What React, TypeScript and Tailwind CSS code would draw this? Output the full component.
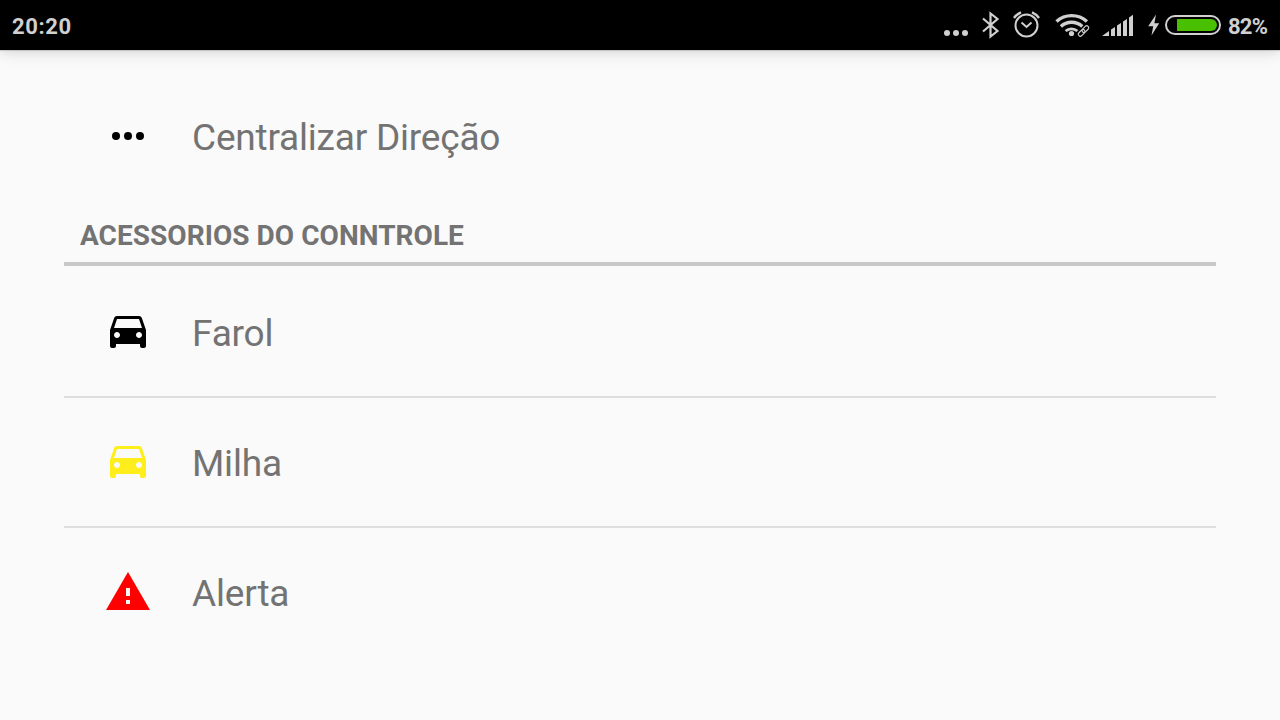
import type { ReactNode } from "react";

interface RowProps {
  label: string;
  className: string;
  icon: ReactNode;
}

const MoreIcon = () => (
  <svg viewBox="0 0 24 24" className="h-12 w-12 fill-black">
    <circle cx="6" cy="12" r="2" />
    <circle cx="12" cy="12" r="2" />
    <circle cx="18" cy="12" r="2" />
  </svg>
);

const CarIcon = ({ className }: { className: string }) => (
  <svg viewBox="0 0 24 24" className={`h-12 w-12 ${className}`}>
    <path d="M18.92 5.01C18.72 4.42 18.16 4 17.5 4h-11c-.66 0-1.21.42-1.42 1.01L3 11v8c0 .55.45 1 1 1h1c.55 0 1-.45 1-1v-1h12v1c0 .55.45 1 1 1h1c.55 0 1-.45 1-1v-8l-2.08-5.99zM6.5 15c-.83 0-1.5-.67-1.5-1.5S5.67 12 6.5 12s1.5.67 1.5 1.5S7.33 15 6.5 15zm11 0c-.83 0-1.5-.67-1.5-1.5s.67-1.5 1.5-1.5 1.5.67 1.5 1.5-.67 1.5-1.5 1.5zM5 10l1.5-4.5h11L19 10H5z" />
  </svg>
);

const AlertIcon = () => (
  <svg viewBox="0 0 24 24" className="h-12 w-12 fill-[#ff0000]">
    <path d="M1 21h22L12 2 1 21zm12-3h-2v-2h2v2zm0-4h-2v-4h2v4z" />
  </svg>
);

const StatusIcons = () => (
  <svg
    viewBox="940 0 284 50"
    className="h-[50px] w-[284px]"
    fill="none"
    stroke="#d0d0d0"
    strokeWidth="2"
  >
    {/* notifications */}
    <g fill="#d0d0d0" stroke="none">
      <circle cx="947" cy="33" r="3" />
      <circle cx="956" cy="33" r="3" />
      <circle cx="965" cy="33" r="3" />
    </g>
    {/* bluetooth */}
    <path d="M983 18.5l14.5 12.5-7 5.5v-23l7 5.5-14.5 12.5" strokeWidth="2.2" />
    {/* alarm */}
    <circle cx="1026.5" cy="25.5" r="11" />
    <path d="M1021.5 22.5l5 4.5 5-4.5" />
    <path
      d="M1014 18a16 16 0 0 1 7-5.7M1039 18a16 16 0 0 0-7-5.7"
      strokeWidth="2.4"
    />
    {/* wifi */}
    <g strokeWidth="3.4">
      <path d="M1056.5 21.5a22.5 22.5 0 0 1 30.4 0" />
      <path d="M1060.9 26.4a16 16 0 0 1 21.4 0" />
      <path d="M1065.6 31a9 9 0 0 1 11.8 0" strokeWidth="2.8" />
    </g>
    <circle cx="1071.5" cy="33.5" r="2.6" fill="#d0d0d0" stroke="none" />
    <g transform="rotate(-45 1083.5 31)" strokeWidth="1.2">
      <path d="M1078 31h11" stroke="#000" strokeWidth="7" />
      <rect x="1077" y="29" width="7.8" height="4" rx="2" />
      <rect x="1082.2" y="29" width="7.8" height="4" rx="2" />
    </g>
    {/* signal */}
    <g fill="#d0d0d0" stroke="none">
      <path d="M1102 36l7-5v5zM1111 36v-6.5l4-2.5v9zM1117 36v-10.5l4-2.5v13zM1123 36v-14.5l4-2.5v17zM1129 36v-18.5l4-2.7v21.2z" />
      {/* charging bolt */}
      <path d="M1156 14.5l-7.8 11.7h5l-1.7 9.3 7.7-12.2h-4.8z" />
    </g>
    {/* battery */}
    <rect x="1166" y="16" width="54" height="18" rx="9" />
    <path d="M1177 19h34a6 6 0 0 1 0 12h-34z" fill="#48c000" stroke="none" />
  </svg>
);

const StatusBar = () => (
  <header className="flex h-[50px] items-center justify-between bg-black px-3 text-[22px] font-bold text-[#d0d0d0] shadow-[0_1px_1px_rgba(0,0,0,0.12),0_2px_14px_rgba(0,0,0,0.16)]">
    <span className="pt-[2px] tracking-[0.6px]">20:20</span>
    <div className="flex items-center gap-1">
      <StatusIcons />
      <span className="w-10 pt-[2px] tracking-[-0.8px]">82%</span>
    </div>
  </header>
);

const Row = ({ label, className, icon }: RowProps) => (
  <li className={`flex items-center gap-10 pl-10 ${className}`}>
    {icon}
    <span className="pt-[3px] text-[37px] leading-none tracking-[-0.2px] text-[#737373]">
      {label}
    </span>
  </li>
);

export default function App() {
  return (
    <div className="h-screen overflow-hidden bg-[#fafafa] font-[Roboto,sans-serif]">
      <StatusBar />
      <main className="px-16">
        <ul className="pt-[21px]">
          <Row
            label="Centralizar Direção"
            className="h-[130px]"
            icon={<MoreIcon />}
          />
        </ul>
        <h2 className="flex h-[65px] items-center border-b-4 border-[#c8c8c8] pt-2 pl-4 text-[28px] font-bold tracking-[0.05px] text-[#737373]">
          ACESSORIOS DO CONNTROLE
        </h2>
        <ul>
          <Row
            label="Farol"
            className="h-[132px] border-b-2 border-[#dedede] pt-[2px]"
            icon={<CarIcon className="fill-black" />}
          />
          <Row
            label="Milha"
            className="h-[130px] border-b-2 border-[#dedede]"
            icon={<CarIcon className="fill-[#ffee1c]" />}
          />
          <Row label="Alerta" className="h-32" icon={<AlertIcon />} />
        </ul>
      </main>
    </div>
  );
}
